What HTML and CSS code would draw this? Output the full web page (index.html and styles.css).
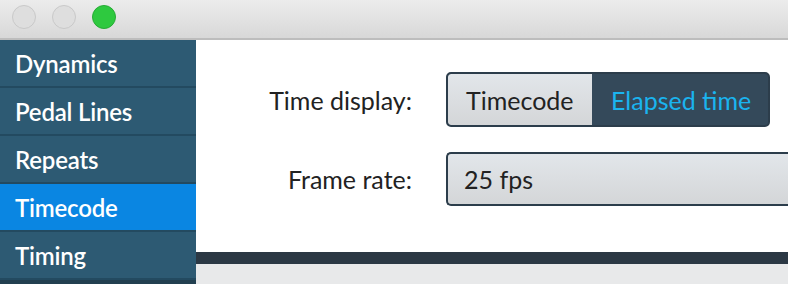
FILE: index.html
```html
<!DOCTYPE html>
<html>
<head>
<meta charset="utf-8">
<link rel="stylesheet" href="styles.css">
</head>
<body>
<div class="window">
  <div class="titlebar">
    <span class="light grey"></span>
    <span class="light grey"></span>
    <span class="light green"></span>
  </div>
  <div class="content">
    <nav class="sidebar">
      <div class="item">Dynamics</div>
      <div class="item">Pedal Lines</div>
      <div class="item">Repeats</div>
      <div class="item active">Timecode</div>
      <div class="item">Timing</div>
      <div class="sidebar-rest"></div>
    </nav>
    <main class="main">
      <div class="form">
        <div class="label">Time display:</div>
        <div class="segmented">
          <div class="seg seg-off">Timecode</div>
          <div class="seg seg-on">Elapsed time</div>
        </div>
        <div class="label">Frame rate:</div>
        <div class="dropdown">25 fps</div>
      </div>
      <div class="footer-bar"></div>
      <div class="footer"></div>
    </main>
  </div>
</div>
</body>
</html>
```

FILE: styles.css
```css
html, body {
  margin: 0;
  padding: 0;
  width: 788px;
  height: 284px;
  overflow: hidden;
  background: #fff;
  font-family: Lato, "Open Sans", sans-serif;
}
.window {
  display: flex;
  flex-direction: column;
  width: 788px;
  height: 284px;
}
.titlebar {
  height: 38px;
  flex: none;
  display: flex;
  align-items: center;
  gap: 16px;
  padding: 0 0 0 12px;
  background: linear-gradient(#ececec, #d8d8d8);
  border-bottom: 2px solid #bdbdbd;
  box-sizing: content-box;
}
.light {
  width: 22px;
  height: 22px;
  border-radius: 50%;
  margin-top: -4px;
}
.light.grey {
  background: #dedede;
  border: 1px solid #c9c9c9;
}
.light.green {
  background: #2ec93f;
  border: 1px solid #27ab35;
}
.content {
  flex: 1;
  display: flex;
  min-height: 0;
}
.sidebar {
  width: 196px;
  flex: none;
  display: flex;
  flex-direction: column;
  background: #2d5a73;
}
.item {
  height: 46px;
  border-bottom: 2px solid #234a60;
  color: #fff;
  font-size: 24px;
  font-weight: 600;
  padding-left: 15px;
  display: flex;
  align-items: center;
  letter-spacing: -0.2px;
}
.item.active {
  background: #0a86e2;
}
.sidebar-rest {
  flex: 1;
  background: #223f50;
}
.main {
  flex: 1;
  display: flex;
  flex-direction: column;
  overflow: hidden;
}
.form {
  flex: 1;
  display: grid;
  grid-template-columns: 216px 360px;
  column-gap: 34px;
  row-gap: 25px;
  align-items: center;
  align-content: start;
  padding-top: 32px;
}
.label {
  text-align: right;
  font-size: 25px;
  color: #222;
}
.segmented {
  display: flex;
  width: 324px;
  height: 55px;
  box-sizing: border-box;
  border: 2px solid #2c3d4b;
  border-radius: 5px;
  background: #34495a;
  overflow: hidden;
}
.seg {
  display: flex;
  align-items: center;
  font-size: 25px;
}
.seg-off {
  width: 144px;
  padding-left: 18px;
  box-sizing: border-box;
  color: #222;
  background: linear-gradient(#e2e6ea, #d4d6d8);
  border-radius: 3px 0 0 3px;
}
.seg-on {
  flex: 1;
  padding-left: 19px;
  color: #1ab4ef;
}
.dropdown {
  height: 54px;
  box-sizing: border-box;
  border: 2px solid #2c3d4b;
  border-right: none;
  border-radius: 5px 0 0 5px;
  background: linear-gradient(#e2e6ea, #d4d6d8);
  display: flex;
  align-items: center;
  padding-left: 16px;
  font-size: 25px;
  color: #222;
}
.footer-bar {
  height: 12px;
  flex: none;
  background: #2b3844;
}
.footer {
  height: 20px;
  flex: none;
  background: #e8e9ea;
}
```
